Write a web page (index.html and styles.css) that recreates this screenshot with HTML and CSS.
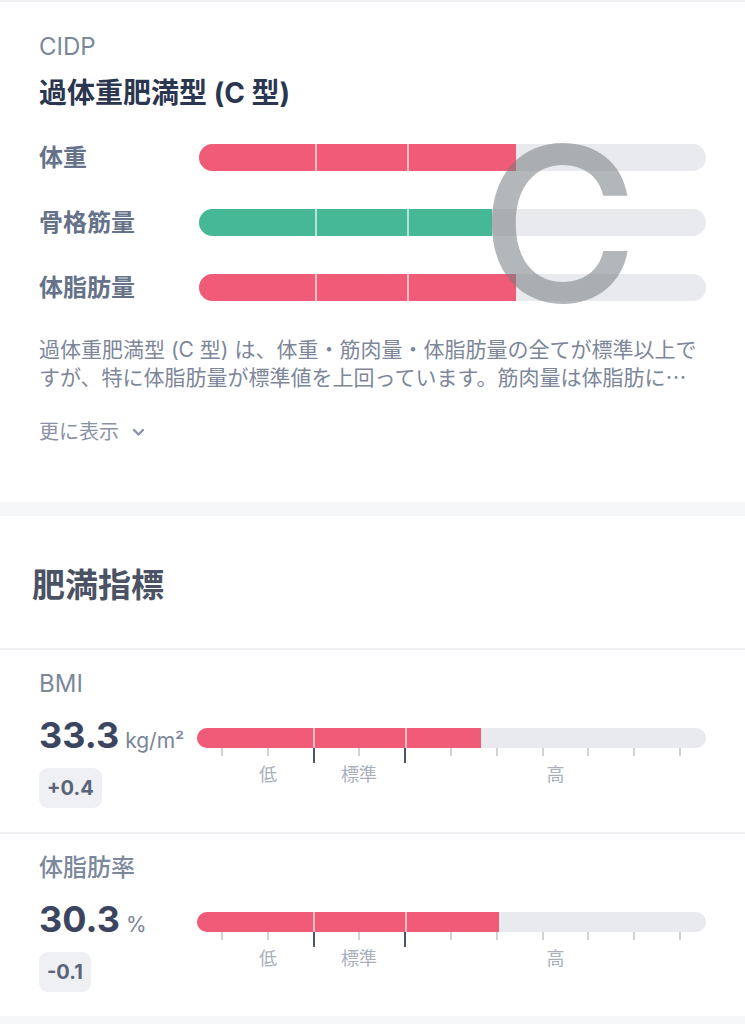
FILE: index.html
```html
<!DOCTYPE html>
<html lang="ja">
<head>
    <meta charset="UTF-8">
    <meta name="viewport" content="width=device-width, initial-scale=1">
    <title>体組成</title>
    <link rel="stylesheet" href="styles.css">
</head>
<body>

<div class="typeCard">
    <div class="typeCode">CIDP</div>
    <div class="typeTitle">過体重肥満型 (C 型)</div>

    <div class="typeRows">
        <div class="typeLabel">体重</div>
        <div class="track"><div class="fill red" style="width:317px"><span></span><span></span><span></span></div></div>

        <div class="typeLabel">骨格筋量</div>
        <div class="track"><div class="fill green" style="width:293px"><span></span><span></span><span></span></div></div>

        <div class="typeLabel">体脂肪量</div>
        <div class="track"><div class="fill red" style="width:317px"><span></span><span></span><span></span></div></div>

        <span class="bigLetter">C</span>
    </div>

    <p class="typeText">過体重肥満型 (C 型) は、体重・筋肉量・体脂肪量の全てが標準以上ですが、特に体脂肪量が標準値を上回っています。筋肉量は体脂肪に⋯</p>

    <div class="moreLink">更に表示
        <svg width="13" height="9" viewBox="0 0 13 9"><path d="M2 2 L6.5 6.5 L11 2" fill="none" stroke="#8a93a5" stroke-width="2.4" stroke-linecap="round" stroke-linejoin="round"/></svg>
    </div>
</div>

<div class="spacer"></div>

<div class="sectionHead">肥満指標</div>

<div class="metric">
    <div class="metricName">BMI</div>
    <div class="metricBody">
        <div>
            <div class="metricValue">33.3<span class="unit">kg/m²</span></div>
            <div class="diff">+0.4</div>
        </div>
        <div class="gauge">
            <div class="track thin"><div class="fill red" style="width:284px"><span></span><span></span><span></span></div></div>
            <div class="ticks">
                <i></i><i></i><i class="major"></i><i></i><i class="major"></i><i></i><i></i><i></i><i></i><i></i><i></i>
            </div>
            <div class="zones">
                <span class="low">低</span><span>標準</span><span>高</span>
            </div>
        </div>
    </div>
</div>

<div class="metric">
    <div class="metricName jp">体脂肪率</div>
    <div class="metricBody">
        <div>
            <div class="metricValue">30.3<span class="unit">%</span></div>
            <div class="diff">-0.1</div>
        </div>
        <div class="gauge">
            <div class="track thin"><div class="fill red" style="width:302px"><span></span><span></span><span></span></div></div>
            <div class="ticks">
                <i></i><i></i><i class="major"></i><i></i><i class="major"></i><i></i><i></i><i></i><i></i><i></i><i></i>
            </div>
            <div class="zones">
                <span class="low">低</span><span>標準</span><span>高</span>
            </div>
        </div>
    </div>
</div>

<div class="spacer"></div>

</body>
</html>
```

FILE: styles.css
```css
body {
    margin: 0;
    background: #ffffff;
    font-family: "Inter", "Noto Sans CJK JP", sans-serif;
    color: #2b3650;
}

/* type card */
.typeCard {
    border-top: 2px solid #eff0f3;
    padding: 30px 39px 0 39px;
    height: 502px;
    box-sizing: border-box;
}
.typeCode {
    font-size: 24px;
    line-height: 30px;
    color: #7b879b;
}
.typeTitle {
    margin-top: 13px;
    font-size: 28px;
    line-height: 36px;
    font-weight: 700;
    color: #2b3650;
}
.typeRows {
    position: relative;
    margin-top: 33px;
    display: grid;
    grid-template-columns: 160px 1fr;
    grid-auto-rows: 27px;
    row-gap: 38px;
    align-items: center;
}
.typeLabel {
    font-size: 24px;
    line-height: 27px;
    font-weight: 600;
    color: #66728a;
}
.bigLetter {
    position: absolute;
    left: 441px;
    top: -28px;
    font-size: 216px;
    line-height: 216px;
    font-weight: 500;
    color: rgba(118, 123, 128, 0.55);
}

/* bars */
.track {
    height: 27px;
    background: #e9eaee;
    border-radius: 14px;
    overflow: hidden;
}
.track.thin {
    height: 20px;
    border-radius: 10px;
}
.fill {
    height: 100%;
    display: flex;
}
.fill.red { background: #f05b77; }
.fill.green { background: #47b895; }
.fill span:nth-child(1) { width: 116px; flex: none; }
.fill span:nth-child(2) { width: 90px; flex: none; border-left: 2px solid rgba(255, 255, 255, 0.6); }
.fill span:nth-child(3) { flex: 1; border-left: 2px solid rgba(255, 255, 255, 0.6); }

.typeText {
    margin: 35px 0 0 0;
    font-size: 21px;
    line-height: 28px;
    color: #7d8799;
}
.moreLink {
    margin-top: 26px;
    font-size: 20px;
    line-height: 28px;
    color: #8a93a5;
    display: flex;
    align-items: center;
    gap: 13px;
}

.spacer {
    height: 14px;
    background: #f6f7f9;
}

/* obesity indices */
.sectionHead {
    padding: 49px 32px 0 32px;
    height: 134px;
    box-sizing: border-box;
    font-size: 33px;
    line-height: 40px;
    font-weight: 700;
    color: #4a5263;
    border-bottom: 2px solid #eff0f3;
}
.metric {
    padding: 19px 39px 24px 39px;
}
.metric + .metric {
    border-top: 2px solid #eff0f3;
}
.metricName {
    font-size: 24px;
    line-height: 30px;
    color: #7c889c;
}
.metricName.jp {
    font-weight: 500;
}
.metricBody {
    margin-top: 14px;
    display: grid;
    grid-template-columns: 158px 1fr;
}
.metricValue {
    height: 44px;
    font-size: 36px;
    line-height: 44px;
    font-weight: 700;
    color: #3b4560;
}
.unit {
    margin-left: 6px;
    font-size: 21px;
    line-height: 20px;
    font-weight: 400;
    color: #7a8599;
}
.diff {
    width: fit-content;
    margin-top: 11px;
    padding: 0 8px;
    height: 40px;
    line-height: 40px;
    border-radius: 9px;
    background: #eef0f4;
    font-size: 20px;
    font-weight: 700;
    color: #5b6478;
}
.gauge {
    padding-top: 15px;
}
.ticks {
    display: flex;
    justify-content: space-between;
    align-items: flex-start;
    height: 15px;
    padding: 0 25px 0 24px;
}
.ticks i {
    width: 2px;
    height: 8px;
    background: #cdd1d8;
}
.ticks i.major {
    height: 15px;
    background: #4b5568;
}
.zones {
    display: grid;
    grid-template-columns: 116px 92px 1fr;
    margin-top: 1px;
    font-size: 18px;
    line-height: 22px;
    color: #a9b0bc;
    text-align: center;
}
.zones .low {
    padding-left: 26px;
}
```
